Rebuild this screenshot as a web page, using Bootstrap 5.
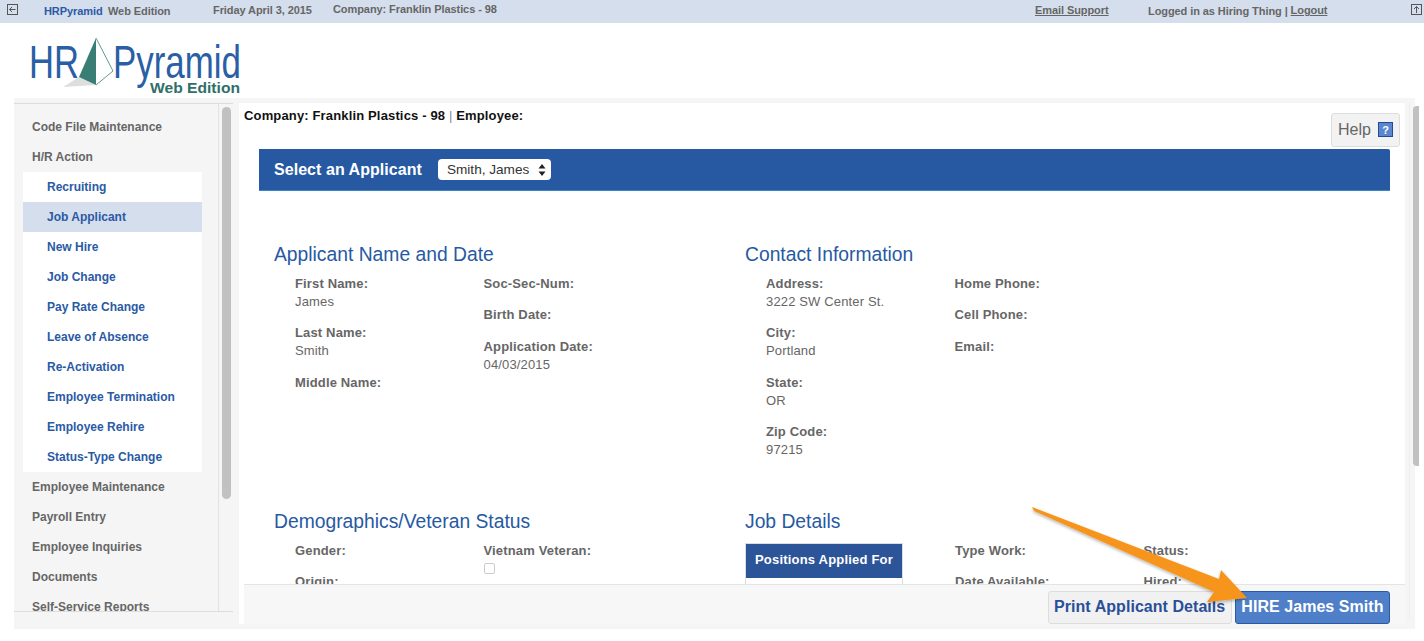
<!DOCTYPE html>
<html lang="en">
<head>
<meta charset="utf-8">
<title>HRPyramid Web Edition</title>
<link href="https://cdn.jsdelivr.net/npm/bootstrap@5.3.0/dist/css/bootstrap.min.css" rel="stylesheet">
<style>
html,body{height:100%;overflow:hidden;background:#fff;font-family:"Liberation Sans",Arial,sans-serif;color:#666}
.page-box{position:relative;width:1424px;height:641px;overflow:hidden}
.topbar{height:23px;background:#d5deec;font-size:11px;letter-spacing:-.08px;font-weight:700;color:#666;padding-left:7px;position:relative}
.topbar a{color:#666}
.tb-ico{width:11px;height:11px;margin-top:4px;flex:none}
.tb-brand{margin-left:26px;margin-top:3px;color:#2a5aa5;width:64px}
.tb-ed{margin-top:3px;width:105px}
.tb-date{margin-top:2px;width:120px}
.tb-co{margin-top:1px;width:702px}
.tb-mail{margin-top:2px;width:113px}
.tb-log{margin-top:3px;width:263px}
.tb-log a{position:relative;top:-1px}
.logo-row{height:75px;padding-left:29px}
.shell{margin-left:14px;width:1401px;height:531px;background:#f5f5f5;padding-top:5px}
.side-col{width:219px;height:509px;border-top:1px solid #ddd;border-bottom:1px solid #ddd;flex:none;overflow:hidden}
.side-inner{width:205px;height:100%;border-right:1px solid #e2e2e2;overflow:hidden;padding-top:8px}
.side-item{height:30px;line-height:30px;font-size:12px;font-weight:700;color:#666;padding-left:18px}
.side-sub{margin-left:9px;width:179px;background:#fff}
.side-sub .side-item{color:#2a5aa5;padding-left:24px}
.side-sub .side-item.on{background:#d5deec}
.bar-track{width:14px;padding:3px 2px 0 3px;flex:none}
.bar-thumb{width:9px;height:392px;background:#c1c1c1;border-radius:5px}
.main-panel{margin-left:6px;width:1166px;height:521px;background:#fff;flex:none;position:relative;overflow:hidden}
.main-scroll{height:481px;padding-left:5px;overflow:hidden}
.top-line{height:46px;padding-top:5px;width:1156px;font-size:13px;letter-spacing:.15px;font-weight:700;color:#111;line-height:15px}
.top-line .sep{color:#888;font-weight:400}
.help-btn{margin-top:5px;width:69px;height:34px;background:#f2f2f2;border:1px solid #ddd;border-radius:3px;font-size:16px;letter-spacing:0;color:#666;font-weight:400;line-height:32px;padding-left:6px}
.help-ico{width:15px;height:15px;vertical-align:-2px;margin-left:3px}
.banner{margin-left:15px;width:1131px;height:42px;background:#2759a3;border-bottom:1px solid #3a87c8;padding-left:15px;color:#fff;font-size:16px;letter-spacing:.05px;font-weight:700;border-top-right-radius:2px}
.pick{margin-left:16px;width:113px;height:21px;font-size:13.6px;letter-spacing:0;line-height:17px;padding:1px 8px 1px 9px;color:#333;border:0;border-radius:4px;background-position:right 5px center;background-size:8px 12px;background-image:url("data:image/svg+xml,%3Csvg xmlns='http://www.w3.org/2000/svg' viewBox='0 0 8 12'%3E%3Cpath fill='%23222' d='M4 0l3.5 4.5h-7zM4 12L.5 7.5h7z'/%3E%3C/svg%3E")}
.two-cols{margin-left:30px;width:1130px}
.sect{width:471px;flex:none}
.sect-head{font-size:19.3px;font-weight:400;color:#2759a3;line-height:24px;margin:0 0 8px}
.sect-1{margin-top:52px;height:267px}
.fields{padding-left:21px}
.fcol{width:188.5px;flex:none;font-size:13px;letter-spacing:.15px;line-height:18px}
.fld{margin-bottom:13.25px;color:#666}
.fld b{display:block;font-weight:700}
.chk{display:block;width:11px;height:11px;margin:3px 0 0 0;border:1px solid #ccc;border-radius:2px;background:#fff}
.pos-tbl{width:158px;border:1px solid #ddd;margin-top:1px;height:60px}
.pos-head{height:34px;background:#2c5499;color:#fff;font-size:13px;letter-spacing:.2px;font-weight:700;line-height:32px;text-align:center}
.pos-col{width:210px;flex:none;margin-left:-21px}
.foot-bar{margin-left:5px;height:40px;width:1161px;background:#f7f7f7;border-top:1px solid #e4e4e4;padding:6px 15px 0 0;gap:3px}
.foot-btn{height:33px;font-size:16px;letter-spacing:.05px;font-weight:700;border-radius:3px;padding:0 5.5px 2px;line-height:27px;color:#2a4f9a;background:#f1f1f1;border:1px solid #ddd}
.foot-btn.hire{background:#4f7fc8;color:#fff;border-color:#2a5aa5}
.main-bar{width:10px;margin-left:4px;height:516px;border-left:1px solid #eee;padding:3px 0 0 3px;flex:none}
.main-thumb{width:6px;height:360px;background:#c1c1c1;border-radius:4px 0 0 4px}
.arrow-over{position:absolute;left:1025px;top:500px;pointer-events:none}
</style>
</head>
<body>
<div class="page-box">
  <div class="topbar d-flex">
    <svg class="tb-ico" viewBox="0 0 11 11"><rect x=".5" y=".5" width="10" height="10" fill="none" stroke="#555"/><path d="M8.5 5.5h-6M5 3L2.5 5.5 5 8" fill="none" stroke="#555"/></svg>
    <div class="tb-brand">HRPyramid</div>
    <div class="tb-ed">Web Edition</div>
    <div class="tb-date">Friday April 3, 2015</div>
    <div class="tb-co">Company: Franklin Plastics - 98</div>
    <div class="tb-mail"><a href="#">Email Support</a></div>
    <div class="tb-log">Logged in as Hiring Thing | <a href="#">Logout</a></div>
    <svg class="tb-ico" viewBox="0 0 11 11"><rect x=".5" y=".5" width="10" height="10" fill="none" stroke="#555"/><path d="M5.5 9V2.5M3 5l2.5-2.5L8 5" fill="none" stroke="#555"/></svg>
  </div>
  <div class="logo-row">
    <svg width="215" height="74" viewBox="29 23 215 74">
      <polygon points="79,77 63,87 96,85" fill="#dedede"/>
      <polygon points="96,38 79,77 96,85" fill="#3a7d74"/>
      <polyline points="96,38 113,71 96,85" fill="none" stroke="#5f9c94" stroke-width="1"/>
      <text x="29" y="78" font-family="Liberation Sans" font-size="46" fill="#2a5fa5" textLength="50" lengthAdjust="spacingAndGlyphs">HR</text>
      <text x="113" y="78" font-family="Liberation Sans" font-size="46" fill="#2a5fa5" textLength="128" lengthAdjust="spacingAndGlyphs">Pyramid</text>
      <text x="150" y="93" font-family="Liberation Sans" font-weight="700" font-size="15" fill="#2f6f68" textLength="90" lengthAdjust="spacingAndGlyphs">Web Edition</text>
    </svg>
  </div>
  <div class="shell d-flex">
    <div class="side-col d-flex">
      <div class="side-inner">
        <div class="side-item">Code File Maintenance</div>
        <div class="side-item">H/R Action</div>
        <div class="side-sub">
          <div class="side-item">Recruiting</div>
          <div class="side-item on">Job Applicant</div>
          <div class="side-item">New Hire</div>
          <div class="side-item">Job Change</div>
          <div class="side-item">Pay Rate Change</div>
          <div class="side-item">Leave of Absence</div>
          <div class="side-item">Re-Activation</div>
          <div class="side-item">Employee Termination</div>
          <div class="side-item">Employee Rehire</div>
          <div class="side-item">Status-Type Change</div>
        </div>
        <div class="side-item">Employee Maintenance</div>
        <div class="side-item">Payroll Entry</div>
        <div class="side-item">Employee Inquiries</div>
        <div class="side-item">Documents</div>
        <div class="side-item">Self-Service Reports</div>
      </div>
      <div class="bar-track"><div class="bar-thumb"></div></div>
    </div>
    <div class="main-panel">
      <div class="main-scroll">
        <div class="top-line d-flex justify-content-between align-items-start">
          <div>Company: Franklin Plastics - 98 <span class="sep">|</span> Employee:</div>
          <div class="help-btn">Help <svg class="help-ico" viewBox="0 0 15 15"><rect x=".5" y=".5" width="14" height="14" fill="#5b86d0" stroke="#234a94"/><text x="7.5" y="11.5" text-anchor="middle" font-size="11" font-weight="700" fill="#fff" font-family="Liberation Sans">?</text></svg></div>
        </div>
        <div class="banner d-flex align-items-center">
          <span>Select an Applicant</span>
          <select class="form-select pick"><option>Smith, James</option></select>
        </div>
        <div class="two-cols d-flex sect-1">
          <div class="sect">
            <h2 class="sect-head">Applicant Name and Date</h2>
            <div class="fields d-flex">
              <div class="fcol">
                <div class="fld"><b>First Name:</b>James</div>
                <div class="fld"><b>Last Name:</b>Smith</div>
                <div class="fld"><b>Middle Name:</b></div>
              </div>
              <div class="fcol">
                <div class="fld"><b>Soc-Sec-Num:</b></div>
                <div class="fld"><b>Birth Date:</b></div>
                <div class="fld"><b>Application Date:</b>04/03/2015</div>
              </div>
            </div>
          </div>
          <div class="sect">
            <h2 class="sect-head">Contact Information</h2>
            <div class="fields d-flex">
              <div class="fcol">
                <div class="fld"><b>Address:</b>3222 SW Center St.</div>
                <div class="fld"><b>City:</b>Portland</div>
                <div class="fld"><b>State:</b>OR</div>
                <div class="fld"><b>Zip Code:</b>97215</div>
              </div>
              <div class="fcol">
                <div class="fld"><b>Home Phone:</b></div>
                <div class="fld"><b>Cell Phone:</b></div>
                <div class="fld"><b>Email:</b></div>
              </div>
            </div>
          </div>
        </div>
        <div class="two-cols d-flex">
          <div class="sect">
            <h2 class="sect-head">Demographics/Veteran Status</h2>
            <div class="fields d-flex">
              <div class="fcol">
                <div class="fld"><b>Gender:</b></div>
                <div class="fld"><b>Origin:</b></div>
              </div>
              <div class="fcol">
                <div class="fld"><b>Vietnam Veteran:</b><span class="chk"></span></div>
              </div>
            </div>
          </div>
          <div class="sect">
            <h2 class="sect-head">Job Details</h2>
            <div class="fields d-flex">
              <div class="pos-col">
                <div class="pos-tbl"><div class="pos-head">Positions Applied For</div></div>
              </div>
              <div class="fcol">
                <div class="fld"><b>Type Work:</b></div>
                <div class="fld"><b>Date Available:</b></div>
              </div>
              <div class="fcol">
                <div class="fld"><b>Status:</b></div>
                <div class="fld"><b>Hired:</b></div>
              </div>
            </div>
          </div>
        </div>
      </div>
      <div class="foot-bar d-flex justify-content-end align-items-start">
        <button type="button" class="btn foot-btn">Print Applicant Details</button>
        <button type="button" class="btn foot-btn hire">HIRE James Smith</button>
      </div>
    </div>
    <div class="main-bar"><div class="main-thumb"></div></div>
  </div>
  <svg class="arrow-over" width="240" height="115" viewBox="1025 500 240 115">
    <defs><filter id="sh" x="-5%" y="-5%" width="110%" height="115%"><feDropShadow dx="0" dy="1.5" stdDeviation="1.5" flood-color="#000" flood-opacity=".3"/></filter></defs>
    <polygon points="1032,507 1034,511 1214,592 1207,602 1247,598 1221,570 1219,579" fill="#f7941e" filter="url(#sh)"/>
  </svg>
</div>
<script src="https://cdn.jsdelivr.net/npm/bootstrap@5.3.0/dist/js/bootstrap.bundle.min.js"></script>
</body>
</html>
